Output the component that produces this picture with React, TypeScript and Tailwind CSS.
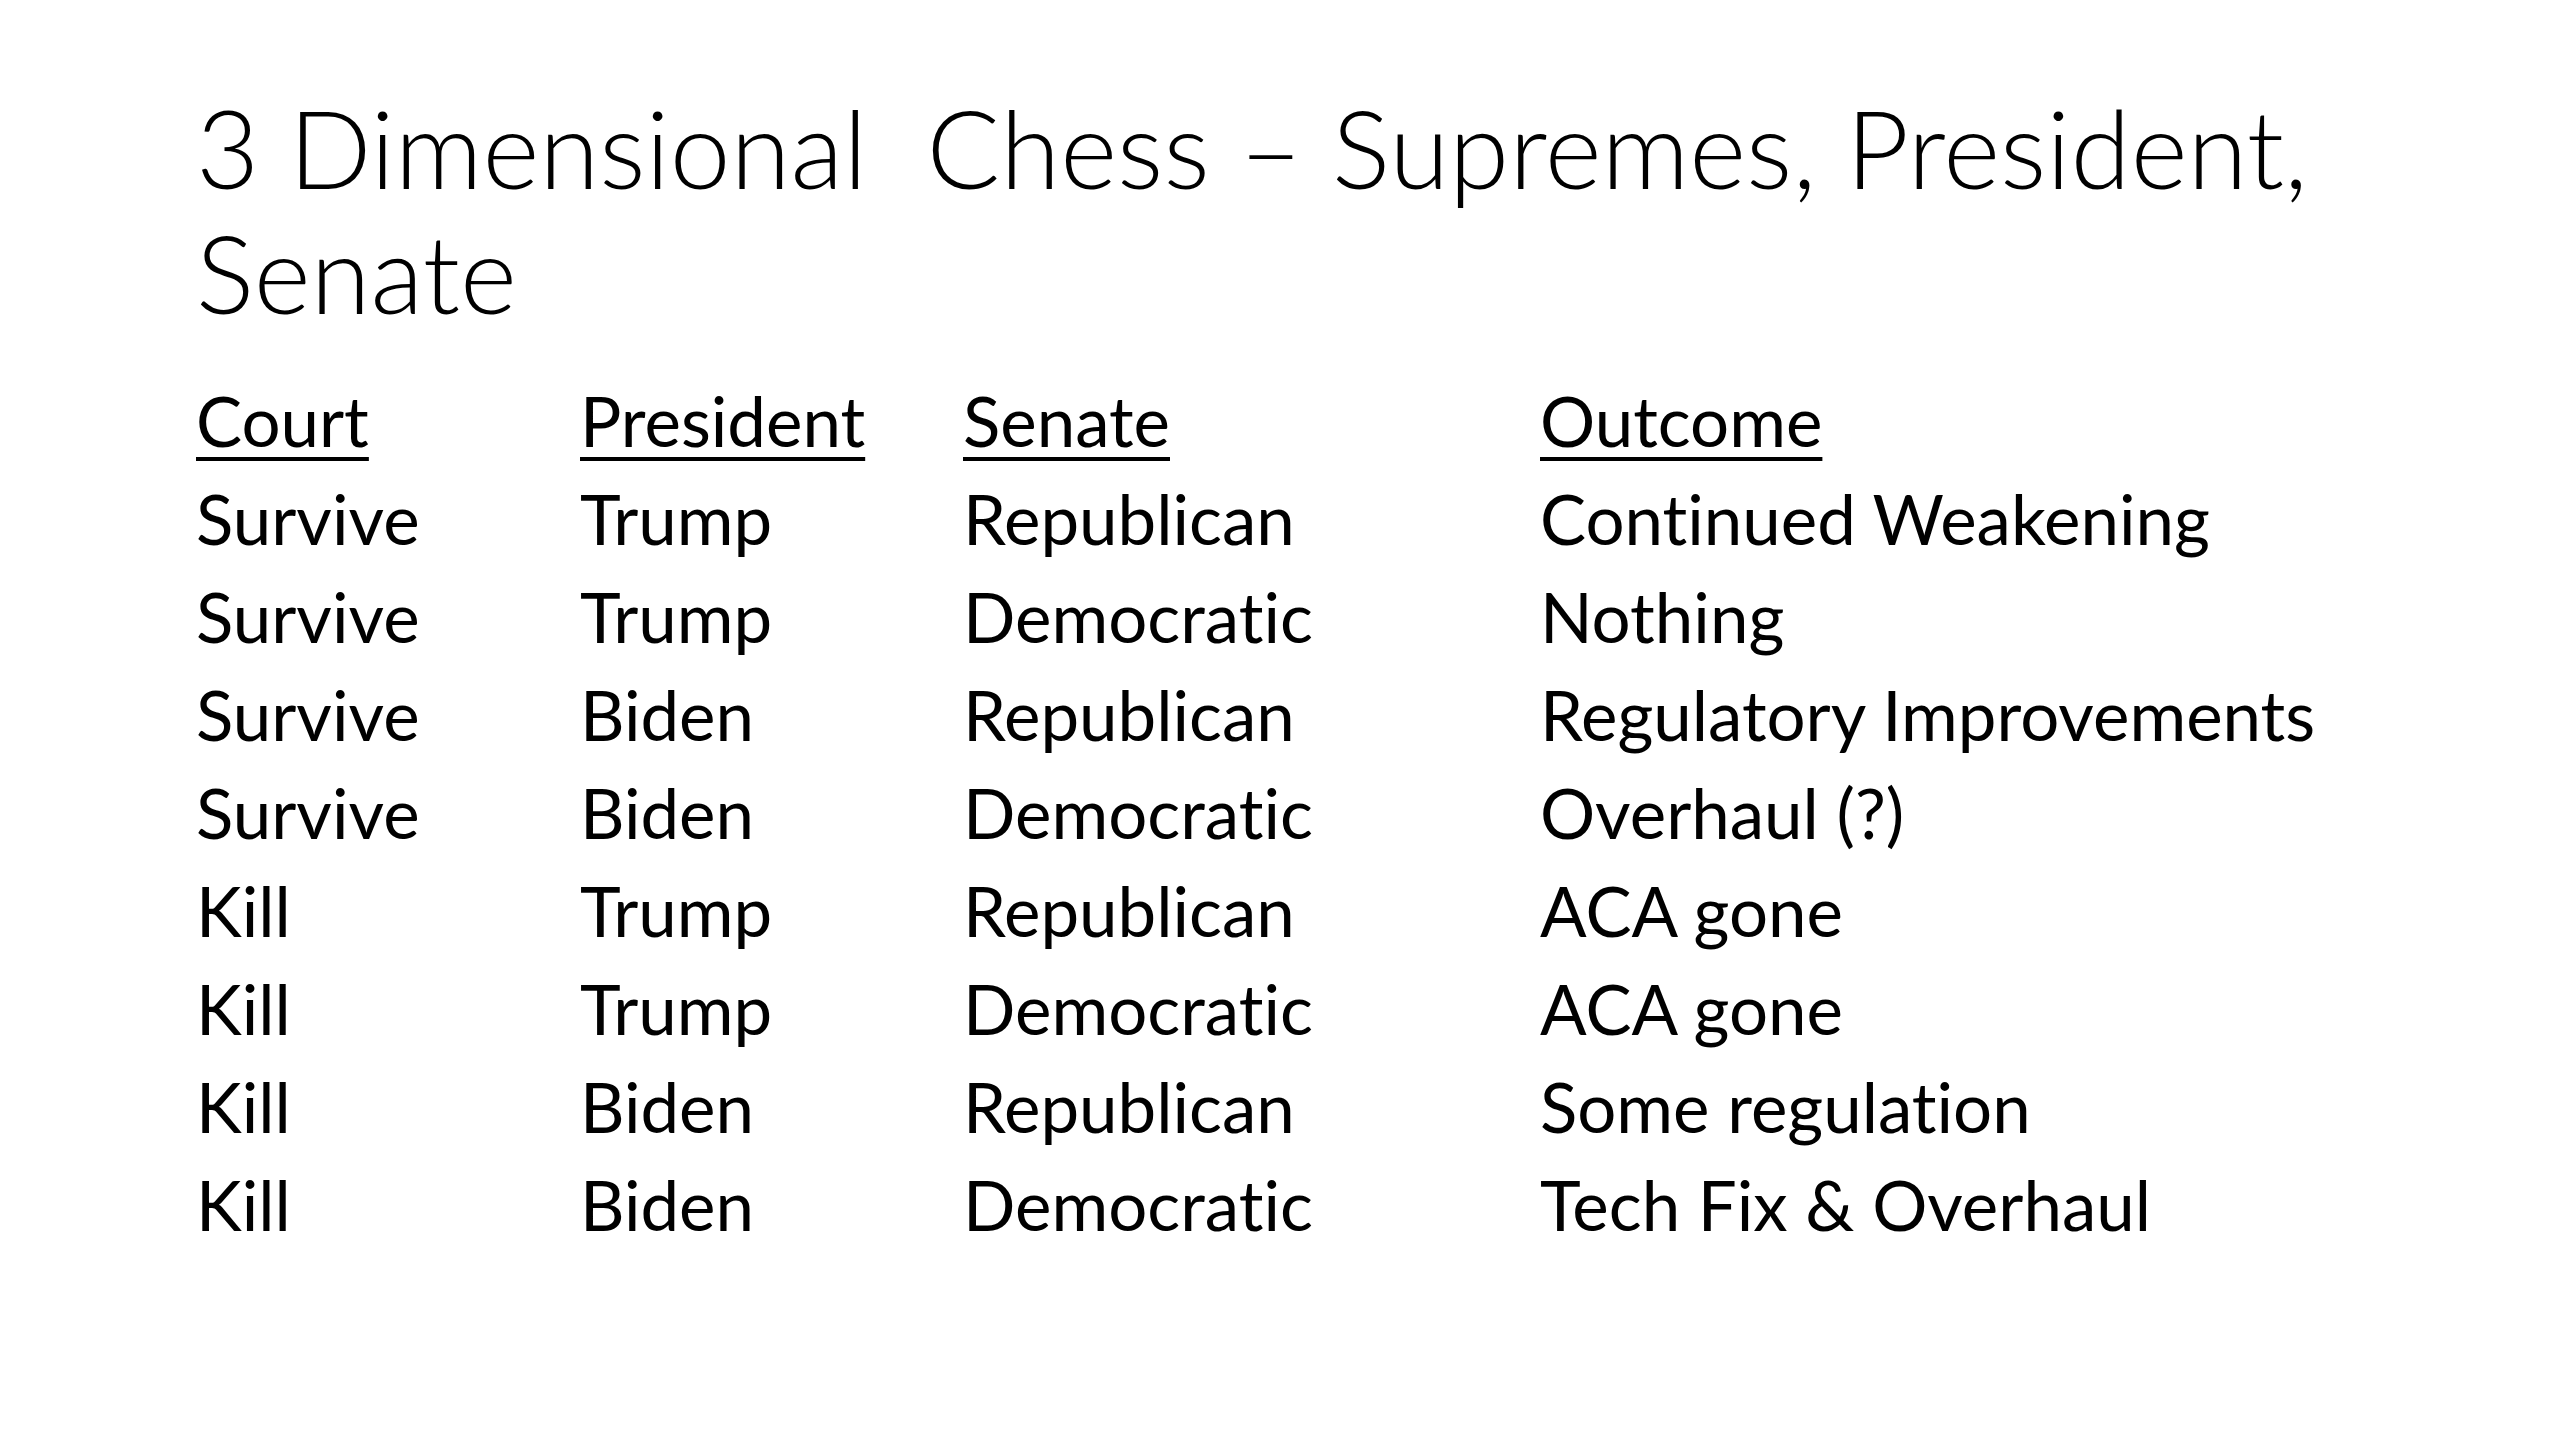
// slide: 3 dimensional chess table
const rows: [string, string, string, string][] = [
  ["Survive", "Trump", "Republican", "Continued Weakening"],
  ["Survive", "Trump", "Democratic", "Nothing"],
  ["Survive", "Biden", "Republican", "Regulatory Improvements"],
  ["Survive", "Biden", "Democratic", "Overhaul (?)"],
  ["Kill", "Trump", "Republican", "ACA gone"],
  ["Kill", "Trump", "Democratic", "ACA gone"],
  ["Kill", "Biden", "Republican", "Some regulation"],
  ["Kill", "Biden", "Democratic", "Tech Fix & Overhaul"],
]

const headers = ["Court", "President", "Senate", "Outcome"]

export default function App() {
  return (
    <div className="w-[2560px] h-[1440px] bg-white text-black font-['Lato','Liberation_Sans',sans-serif] [font-variant-ligatures:none] overflow-hidden">
      <div className="pl-[196px] pt-[84px]">
        {/* title */}
        <h1 className="text-[109px] font-light leading-[125px] whitespace-pre">
          {"3 Dimensional  Chess – Supremes, President,"}
          <br />
          Senate
        </h1>

        {/* scenario table */}
        <div className="mt-[38px] grid grid-cols-[384px_383px_577px_auto] text-[69px] leading-[98px]">
          {headers.map((h) => (
            <div key={h} className="underline decoration-[4px] underline-offset-[10px]">
              {h}
            </div>
          ))}
          {rows.map((r, i) =>
            r.map((c, j) => <div key={`${i}-${j}`}>{c}</div>)
          )}
        </div>
      </div>
    </div>
  )
}
